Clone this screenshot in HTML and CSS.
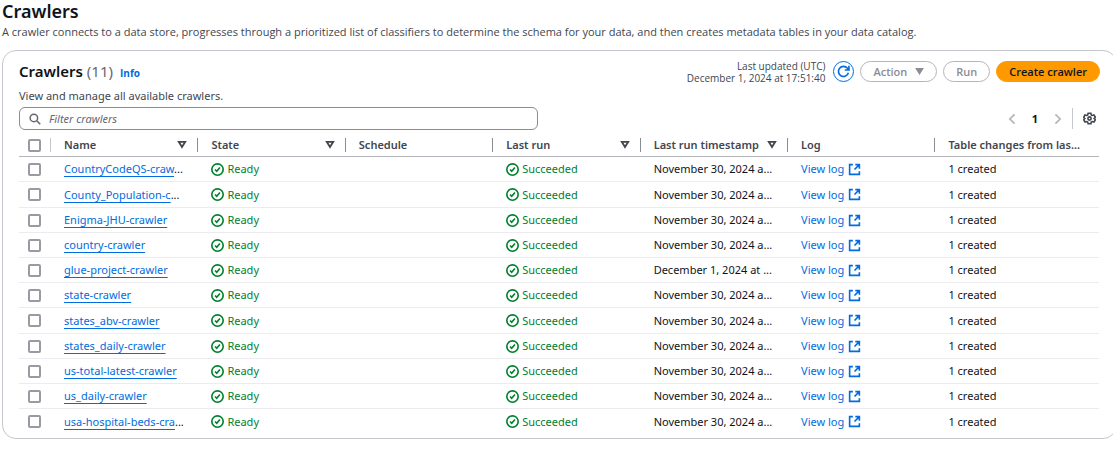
FILE: index.html
```html
<!DOCTYPE html>
<html lang="en">
<head>
<meta charset="utf-8">
<title>Crawlers</title>
<link rel="stylesheet" href="styles.css">
</head>
<body>
<svg class="sprite" aria-hidden="true">
  <symbol id="ok" viewBox="0 0 16 16"><circle cx="8" cy="8" r="7"/><path d="M5 8l2 2.300L11 5.500"/></symbol>
  <symbol id="ext" viewBox="0 0 16 16"><path d="M6 2H2v12h12v-4M9 2h5v5M14 2L8 8"/></symbol>
  <symbol id="sort" viewBox="0 0 16 16"><path d="M3 3h10l-5 8z"/></symbol>
</svg>
<main class="page">
  <h1 class="page-title">Crawlers</h1>
  <p class="page-text">A crawler connects to a data store, progresses through a prioritized list of classifiers to determine the schema for your data, and then creates metadata tables in your data catalog.</p>
  <section class="card">
    <header class="card-header">
      <div class="heading">
        <h2 class="card-title">Crawlers <span class="count">(11)</span></h2>
        <a class="info" href="#">Info</a>
      </div>
      <div class="actions">
        <p class="updated">Last updated (UTC)<br>December 1, 2024 at 17:51:40</p>
        <button class="refresh" type="button" aria-label="Refresh"><svg class="refresh-icon" viewBox="0 0 16 16"><path d="M14 9.500A6.200 6.200 0 1 1 12.800 4L14.500 6M14.700 1v5.200H9.500"/></svg></button>
        <button class="button" type="button" disabled>Action <svg class="caret" viewBox="0 0 10 8"><path d="M0 0h10L5 8z"/></svg></button>
        <button class="button" type="button" disabled>Run</button>
        <button class="button primary" type="button">Create crawler</button>
      </div>
    </header>
    <p class="card-text">View and manage all available crawlers.</p>
    <div class="tools">
      <label class="search">
        <svg class="search-icon" viewBox="0 0 16 16"><circle cx="6.500" cy="6.500" r="5"/><path d="M10.500 10.500L15 15"/></svg>
        <input class="search-input" type="text" placeholder="Filter crawlers" aria-label="Filter crawlers">
      </label>
      <nav class="pager" aria-label="Pages">
        <button class="icon-button" type="button" aria-label="Previous page" disabled><svg class="chevron" viewBox="0 0 9 14"><path d="M7.500 1.500L2 7l5.500 5.500"/></svg></button>
        <button class="page-number" type="button">1</button>
        <button class="icon-button" type="button" aria-label="Next page" disabled><svg class="chevron" viewBox="0 0 9 14"><path d="M1.500 1.500L7 7l-5.500 5.500"/></svg></button>
        <span class="settings"><button class="icon-button" type="button" aria-label="Preferences"><svg class="gear" viewBox="0 0 16 16"><path d="M6.300 1.500h3.400l.5 2 1.300.7 2-.6 1.700 2.900L13.700 8l1.500 1.500-1.700 2.900-2-.6-1.300.7-.5 2H6.300l-.5-2-1.300-.7-2 .6L.8 9.500 2.300 8 .8 6.500l1.700-2.900 2 .6 1.300-.7z"/><circle cx="8" cy="8" r="2"/></svg></button></span>
      </nav>
    </div>
    <table class="table">
      <colgroup><col class="col-check"><col class="col"><col class="col"><col class="col"><col class="col"><col class="col"><col class="col"><col></colgroup>
      <thead>
        <tr>
          <th><input class="check" type="checkbox" aria-label="Select all"></th>
          <th><div class="th">Name<svg class="sort"><use href="#sort"/></svg></div></th>
          <th><div class="th">State<svg class="sort"><use href="#sort"/></svg></div></th>
          <th><div class="th">Schedule</div></th>
          <th><div class="th">Last run<svg class="sort"><use href="#sort"/></svg></div></th>
          <th><div class="th">Last run timestamp<svg class="sort"><use href="#sort"/></svg></div></th>
          <th><div class="th">Log</div></th>
          <th><div class="th">Table changes from las...</div></th>
        </tr>
      </thead>
      <tbody>
        <tr><td><input class="check" type="checkbox" aria-label="Select CountryCodeQS-crawler"></td><td><a class="name" href="#">CountryCodeQS-craw</a>...</td><td><span class="status"><svg class="ok"><use href="#ok"/></svg>Ready</span></td><td></td><td><span class="status"><svg class="ok"><use href="#ok"/></svg>Succeeded</span></td><td>November 30, 2024 a...</td><td><a class="log" href="#">View log<svg class="ext"><use href="#ext"/></svg></a></td><td>1 created</td></tr>
        <tr><td><input class="check" type="checkbox" aria-label="Select County_Population-crawler"></td><td><a class="name" href="#">County_Population-c</a>...</td><td><span class="status"><svg class="ok"><use href="#ok"/></svg>Ready</span></td><td></td><td><span class="status"><svg class="ok"><use href="#ok"/></svg>Succeeded</span></td><td>November 30, 2024 a...</td><td><a class="log" href="#">View log<svg class="ext"><use href="#ext"/></svg></a></td><td>1 created</td></tr>
        <tr><td><input class="check" type="checkbox" aria-label="Select Enigma-JHU-crawler"></td><td><a class="name" href="#">Enigma-JHU-crawler</a></td><td><span class="status"><svg class="ok"><use href="#ok"/></svg>Ready</span></td><td></td><td><span class="status"><svg class="ok"><use href="#ok"/></svg>Succeeded</span></td><td>November 30, 2024 a...</td><td><a class="log" href="#">View log<svg class="ext"><use href="#ext"/></svg></a></td><td>1 created</td></tr>
        <tr><td><input class="check" type="checkbox" aria-label="Select country-crawler"></td><td><a class="name" href="#">country-crawler</a></td><td><span class="status"><svg class="ok"><use href="#ok"/></svg>Ready</span></td><td></td><td><span class="status"><svg class="ok"><use href="#ok"/></svg>Succeeded</span></td><td>November 30, 2024 a...</td><td><a class="log" href="#">View log<svg class="ext"><use href="#ext"/></svg></a></td><td>1 created</td></tr>
        <tr><td><input class="check" type="checkbox" aria-label="Select glue-project-crawler"></td><td><a class="name" href="#">glue-project-crawler</a></td><td><span class="status"><svg class="ok"><use href="#ok"/></svg>Ready</span></td><td></td><td><span class="status"><svg class="ok"><use href="#ok"/></svg>Succeeded</span></td><td>December 1, 2024 at ...</td><td><a class="log" href="#">View log<svg class="ext"><use href="#ext"/></svg></a></td><td>1 created</td></tr>
        <tr><td><input class="check" type="checkbox" aria-label="Select state-crawler"></td><td><a class="name" href="#">state-crawler</a></td><td><span class="status"><svg class="ok"><use href="#ok"/></svg>Ready</span></td><td></td><td><span class="status"><svg class="ok"><use href="#ok"/></svg>Succeeded</span></td><td>November 30, 2024 a...</td><td><a class="log" href="#">View log<svg class="ext"><use href="#ext"/></svg></a></td><td>1 created</td></tr>
        <tr><td><input class="check" type="checkbox" aria-label="Select states_abv-crawler"></td><td><a class="name" href="#">states_abv-crawler</a></td><td><span class="status"><svg class="ok"><use href="#ok"/></svg>Ready</span></td><td></td><td><span class="status"><svg class="ok"><use href="#ok"/></svg>Succeeded</span></td><td>November 30, 2024 a...</td><td><a class="log" href="#">View log<svg class="ext"><use href="#ext"/></svg></a></td><td>1 created</td></tr>
        <tr><td><input class="check" type="checkbox" aria-label="Select states_daily-crawler"></td><td><a class="name" href="#">states_daily-crawler</a></td><td><span class="status"><svg class="ok"><use href="#ok"/></svg>Ready</span></td><td></td><td><span class="status"><svg class="ok"><use href="#ok"/></svg>Succeeded</span></td><td>November 30, 2024 a...</td><td><a class="log" href="#">View log<svg class="ext"><use href="#ext"/></svg></a></td><td>1 created</td></tr>
        <tr><td><input class="check" type="checkbox" aria-label="Select us-total-latest-crawler"></td><td><a class="name" href="#">us-total-latest-crawler</a></td><td><span class="status"><svg class="ok"><use href="#ok"/></svg>Ready</span></td><td></td><td><span class="status"><svg class="ok"><use href="#ok"/></svg>Succeeded</span></td><td>November 30, 2024 a...</td><td><a class="log" href="#">View log<svg class="ext"><use href="#ext"/></svg></a></td><td>1 created</td></tr>
        <tr><td><input class="check" type="checkbox" aria-label="Select us_daily-crawler"></td><td><a class="name" href="#">us_daily-crawler</a></td><td><span class="status"><svg class="ok"><use href="#ok"/></svg>Ready</span></td><td></td><td><span class="status"><svg class="ok"><use href="#ok"/></svg>Succeeded</span></td><td>November 30, 2024 a...</td><td><a class="log" href="#">View log<svg class="ext"><use href="#ext"/></svg></a></td><td>1 created</td></tr>
        <tr><td><input class="check" type="checkbox" aria-label="Select usa-hospital-beds-crawler"></td><td><a class="name" href="#">usa-hospital-beds-cra</a>...</td><td><span class="status"><svg class="ok"><use href="#ok"/></svg>Ready</span></td><td></td><td><span class="status"><svg class="ok"><use href="#ok"/></svg>Succeeded</span></td><td>November 30, 2024 a...</td><td><a class="log" href="#">View log<svg class="ext"><use href="#ext"/></svg></a></td><td>1 created</td></tr>
      </tbody>
    </table>
  </section>
</main>
</body>
</html>
```

FILE: styles.css
```css
* { box-sizing: border-box; }
body {
  margin: 0;
  overflow-x: hidden;
  background: #fff;
  color: #0f141a;
  font: 11px/16px "Noto Sans", "Open Sans", sans-serif;
}
h1, h2, p { margin: 0; }
a { color: #006ce0; text-decoration: none; }
button, input { font: inherit; margin: 0; }
svg { fill: none; stroke: currentColor; flex: none; }
.sprite { display: none; }

.page { padding-left: 2px; margin-right: -4px; }
.page-title { font-family: "Noto Sans", sans-serif; font-size: 18px; font-weight: 600; line-height: 22px; }
.page-text { color: #424650; font-family: "Open Sans", sans-serif; line-height: 20px; }
.card {
  margin-top: 8px;
  padding: 9px 16px 4px;
  border: 1px solid #c6c6cd;
  border-radius: 14px;
}
.card-header { display: flex; justify-content: space-between; height: 27px; }
.heading { display: flex; align-items: baseline; gap: 7px; }
.card-title { font-family: "Noto Sans", sans-serif; font-size: 15px; font-weight: 600; line-height: 22px; }
.count { font-weight: 400; color: #656871; }
.info { font-family: "Open Sans", sans-serif; font-size: 10px; font-weight: 700; }
.actions { display: flex; align-items: center; gap: 6px; height: 23px; }
.updated {
  margin-right: 2px;
  color: #424650;
  font-family: "Open Sans", sans-serif;
  font-size: 10px;
  line-height: 12px;
  text-align: right;
}
.refresh {
  display: grid;
  place-items: center;
  width: 21px;
  height: 21px;
  padding: 0;
  border: 1px solid #006ce0;
  border-radius: 50%;
  background: #fff;
  color: #006ce0;
}
.refresh-icon { width: 13px; height: 13px; stroke-width: 2; }
.button {
  display: flex;
  align-items: center;
  gap: 8px;
  height: 21px;
  padding: 0 12px;
  border: 1px solid #b4b4bb;
  border-radius: 11px;
  background: #fff;
  color: #8c8c94;
  font-family: "Open Sans", sans-serif;
  font-weight: 600;
}
.caret { width: 9px; height: 7px; fill: currentColor; stroke: none; }
.primary { border-color: #ff9900; background: #ff9900; color: #0f141a; }
.card-text { color: #424650; line-height: 18px; }

.tools { display: flex; justify-content: space-between; align-items: center; margin-top: 2px; }
.search {
  display: flex;
  align-items: center;
  gap: 8px;
  width: 48%;
  height: 23px;
  padding: 0 9px;
  border: 1px solid #8c8c94;
  border-radius: 6px;
}
.search-icon { width: 12px; height: 12px; color: #656871; stroke-width: 2; }
.search-input { flex: 1; min-width: 0; padding: 0; border: 0; outline: 0; background: none; }
.search-input::placeholder { color: #656871; font-style: italic; opacity: 1; }
.pager { display: flex; align-items: center; gap: 10px; }
.icon-button, .page-number { padding: 0; border: 0; background: none; color: #424650; }
.icon-button { display: grid; place-items: center; }
.icon-button:disabled { color: #b4b4bb; }
.page-number { padding: 0 6px; color: #0f141a; font-weight: 700; }
.chevron { width: 8px; height: 12px; stroke-width: 2; }
.settings { padding: 4px 4px 4px 10px; border-left: 1px solid #c6c6cd; }
.gear { width: 13px; height: 13px; stroke-width: 2; }

.table {
  width: calc(100% - 1px);
  margin-top: 4px;
  table-layout: fixed;
  border-collapse: separate;
  border-spacing: 0;
}
.col-check { width: 31px; }
.col { width: 13.65%; }
.table th, .table td {
  padding: 0 13px 0 14px;
  text-align: left;
  vertical-align: middle;
  white-space: nowrap;
}
.table th { height: 23px; padding: 0; border-bottom: 1px solid #b4b4bb; color: #424650; }
.table td { height: 25px; border-bottom: 1px solid #ebebf0; }
.table tbody tr:nth-child(5n + 2) td { height: 26px; }
.table tbody tr:last-child td { border-bottom: 0; }
.table th:first-child, .table td:first-child { padding: 0 0 0 9px; }
.th {
  display: flex;
  align-items: center;
  justify-content: space-between;
  height: 14px;
  padding: 0 10px 0 13px;
  border-left: 1px solid #8c8c94;
  font-family: "Noto Sans", sans-serif;
  font-weight: 600;
}
th:nth-child(2) .th { border-left-color: #c6c6cd; }
.sort { width: 10px; height: 10px; stroke-width: 3; }
.check {
  display: block;
  appearance: none;
  width: 13px;
  height: 13px;
  border: 2px solid #9a9aa2;
  border-radius: 2px;
  background: #fff;
}
.name { text-decoration: underline 1px; text-underline-offset: 3px; text-decoration-skip-ink: none; }
.status, .log { display: flex; align-items: center; gap: 3px; }
.status { color: #00802f; }
.log { gap: 4px; }
.ok { width: 13px; height: 13px; stroke-width: 2; }
.ext { width: 13px; height: 13px; stroke-width: 2; }
```
